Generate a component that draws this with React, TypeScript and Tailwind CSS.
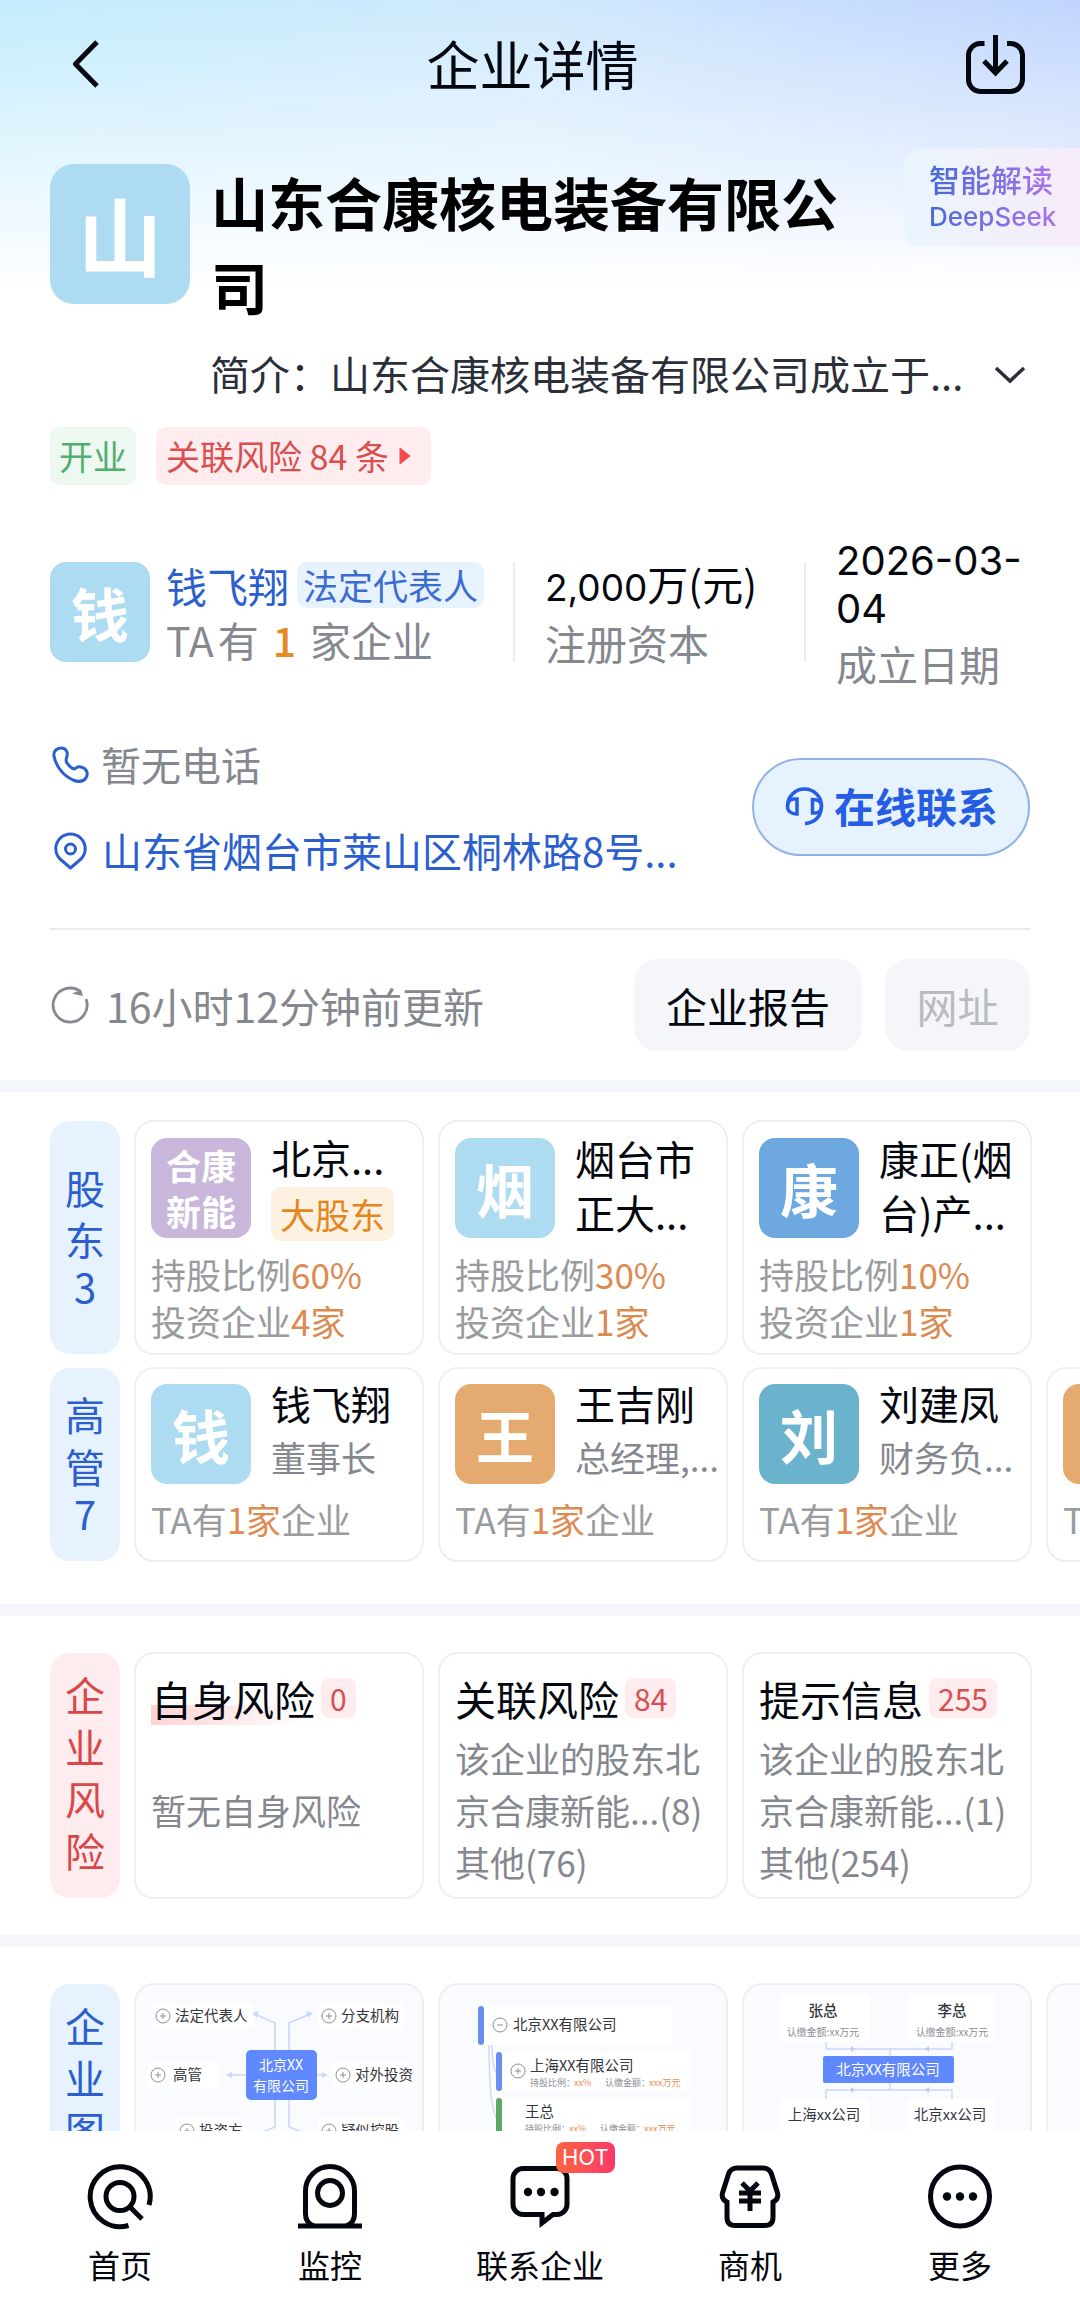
import React from "react";

type Tone = "sky" | "purple" | "blue" | "orange" | "teal";

const toneClass: Record<Tone, string> = {
  sky: "bg-[#addcf2]",
  purple: "bg-[#c8b7da]",
  blue: "bg-[#6da9e0]",
  orange: "bg-[#e5aa70]",
  teal: "bg-[#6bb3cd]",
};

function Avatar({ text, tone }: { text: string; tone: Tone }) {
  const small = text.length > 1;
  return (
    <div
      className={`flex size-[100px] shrink-0 items-center justify-center rounded-2xl text-center font-bold text-white ${toneClass[tone]} ${
        small ? "px-3 text-[35px] leading-[46px]" : "text-[58px] leading-none"
      }`}
    >
      {text}
    </div>
  );
}

function SideLabel({ chars, red }: { chars: string[]; red?: boolean }) {
  return (
    <h2
      className={`my-px flex w-[70px] shrink-0 flex-col items-center justify-center rounded-[20px] pb-2 text-[40px] font-normal ${
        red ? "bg-[#feecef] text-[#d94848]" : "bg-[#e7f2ff] text-[#2b5fd0]"
      }`}
    >
      {chars.map((c) => (
        <span key={c} className={/\d/.test(c) ? "leading-[42px]" : "leading-[52px]"}>
          {c}
        </span>
      ))}
    </h2>
  );
}

const cardClass = "w-[290px] shrink-0 rounded-[20px] border-2 border-[#efeff1] bg-white";

function CardRow({ label, children }: { label: React.ReactNode; children: React.ReactNode }) {
  return (
    <div className="flex gap-[14px] pl-[50px]">
      {label}
      <div className="flex min-w-0 flex-1 gap-[14px] overflow-x-auto [scrollbar-width:none]">{children}</div>
    </div>
  );
}

const shareholders: { logo: string; tone: Tone; name: string; tag?: string; share: string; invested: string }[] = [
  { logo: "合康新能", tone: "purple", name: "北京...", tag: "大股东", share: "60%", invested: "4家" },
  { logo: "烟", tone: "sky", name: "烟台市正大...", share: "30%", invested: "1家" },
  { logo: "康", tone: "blue", name: "康正(烟台)产...", share: "10%", invested: "1家" },
];

const executives: { logo: string; tone: Tone; name: string; role: string }[] = [
  { logo: "钱", tone: "sky", name: "钱飞翔", role: "董事长" },
  { logo: "王", tone: "orange", name: "王吉刚", role: "总经理,..." },
  { logo: "刘", tone: "teal", name: "刘建凤", role: "财务负..." },
  { logo: "", tone: "orange", name: "", role: "" },
];

const risks = [
  { title: "自身风险", count: "0", lines: ["暂无自身风险"] },
  { title: "关联风险", count: "84", lines: ["该企业的股东北", "京合康新能...(8)", "其他(76)"] },
  { title: "提示信息", count: "255", lines: ["该企业的股东北", "京合康新能...(1)", "其他(254)"] },
];

function Toggle({ x, y, minus }: { x: number; y: number; minus?: boolean }) {
  return (
    <g fill="none" stroke="#8b8e96" strokeWidth="1">
      <circle cx={x} cy={y} r="7" />
      <path d={`M${x - 3} ${y}h6`} />
      {!minus && <path d={`M${x} ${y - 3}v6`} />}
    </g>
  );
}

function RelationDiagram() {
  const nodes = [
    { x: 27, y: 31, t: "法定代表人", w: 101 },
    { x: 193, y: 31, t: "分支机构", w: 86 },
    { x: 22, y: 90, t: "高管", w: 72, dx: 15 },
    { x: 207, y: 90, t: "对外投资", w: 78 },
    { x: 51, y: 146, t: "投资方", w: 70 },
    { x: 193, y: 146, t: "疑似控股", w: 86 },
  ];
  return (
    <svg viewBox="0 0 286 242" className="w-full" role="img" aria-label="企业关系图">
      <path
        fill="none"
        stroke="#cbd8f6"
        strokeWidth="1.6"
        d="M139 66V38L119 29M153 66V38L174 29M139 115V142L119 150M153 115V142L174 150M111 90H93M181 90H189"
      />
      <path fill="#cbd8f6" d="M116 28l7-2-2 7zM177 28l-7-2 2 7zM90 90l6-3v6zM192 90l-6-3v6z" />
      {nodes.map((n) => (
        <g key={n.t}>
          <rect x={n.x - 11} y={n.y - 13} width={n.w} height="26" rx="5" fill="#fff" />
          <Toggle x={n.x} y={n.y} />
          <text x={n.x + (n.dx ?? 12)} y={n.y + 5} fontSize="14.5" fill="#33363d">
            {n.t}
          </text>
        </g>
      ))}
      <rect x="110" y="65" width="71" height="50" rx="5" fill="#6189ff" />
      <g fill="#fff" fontSize="14" textAnchor="middle">
        <text x="145" y="85">北京XX</text>
        <text x="145" y="106">有限公司</text>
      </g>
    </svg>
  );
}

function StakeLine({ x, y }: { x: number; y: number }) {
  return (
    <g fontSize="9" fill="#8b8e96">
      <text x={x} y={y}>持股比例：</text>
      <text x={x + 44} y={y} fill="#ed8b4f">xx%</text>
      <text x={x + 75} y={y}>认缴金额：</text>
      <text x={x + 119} y={y} fill="#ed8b4f">xxx万元</text>
    </g>
  );
}

function EquityTree() {
  return (
    <svg viewBox="0 0 286 242" className="w-full" role="img" aria-label="股权结构图">
      <g fill="#fff">
        <rect x="42" y="21" width="191" height="39" rx="3" />
        <rect x="60" y="67" width="191" height="39" rx="3" />
        <rect x="60" y="113" width="191" height="39" rx="3" />
      </g>
      <path d="M49 60C49 96 51 125 57 134M52 60C52 75 53 84 57 89" fill="none" stroke="#cbd8f6" strokeWidth="1.4" />
      <rect x="38" y="21" width="6" height="39" rx="3" fill="#6b8df0" />
      <rect x="56" y="67" width="6" height="39" rx="3" fill="#6b8df0" />
      <rect x="56" y="113" width="6" height="39" rx="3" fill="#5fa767" />
      <Toggle x={60} y={40} minus />
      <Toggle x={78} y={86} />
      <g fill="#33363d" fontSize="14.5">
        <text x="73" y="45">北京XX有限公司</text>
        <text x="90" y="86">上海XX有限公司</text>
        <text x="85" y="132">王总</text>
      </g>
      <StakeLine x={90} y={101} />
      <StakeLine x={85} y={147} />
    </svg>
  );
}

function ControlDiagram() {
  return (
    <svg viewBox="0 0 286 242" className="w-full" role="img" aria-label="股权穿透图">
      <g fill="#fff">
        <rect x="36" y="9" width="90" height="48" rx="3" />
        <rect x="163" y="9" width="88" height="48" rx="3" />
        <rect x="36" y="114" width="90" height="48" rx="3" />
        <rect x="163" y="114" width="88" height="48" rx="3" />
      </g>
      <path
        d="M82 57V64H208V57M146 64V71M146 98V105M82 114V105H208V114"
        fill="none"
        stroke="#cbd8f6"
        strokeWidth="1.4"
      />
      <path d="M107 61l4 3-4 3zM185 61l-4 3 4 3zM107 102l4 3-4 3zM185 102l-4 3 4 3z" fill="#b9caf5" />
      <rect x="79" y="71" width="131" height="27" rx="2" fill="#6189ff" />
      <text x="144" y="90" fontSize="14.5" fill="#fff" textAnchor="middle">北京XX有限公司</text>
      <g fill="#33363d" fontSize="14.5" textAnchor="middle">
        <text x="79" y="31" fontWeight="500">张总</text>
        <text x="208" y="31" fontWeight="500">李总</text>
        <text x="80" y="135">上海xx公司</text>
        <text x="206" y="135">北京xx公司</text>
      </g>
      <g fill="#8b8e96" fontSize="10" textAnchor="middle">
        <text x="79" y="51">认缴金额:xx万元</text>
        <text x="208" y="51">认缴金额:xx万元</text>
        <text x="81" y="156">认缴金额:xx万元</text>
        <text x="208" y="156">认缴金额:xx万元</text>
      </g>
    </svg>
  );
}

function HomeIcon() {
  return (
    <>
      <path d="M42.500 62.500A30 30 0 1 1 63 42" />
      <circle cx="34" cy="33.500" r="14" />
      <path d="M44 44L56 56" />
    </>
  );
}

function MonitorIcon() {
  return (
    <>
      <path d="M18 63C12 61 9.500 57 9.500 51V28A24.500 24.500 0 0 1 58.500 28V51C58.500 57 56 61 50 63" />
      <circle cx="34" cy="30" r="12.500" />
      <path d="M2 63H66" />
    </>
  );
}

function ChatIcon() {
  return (
    <>
      <path d="M17 5.500H51A10 10 0 0 1 61 15.500V41.500A10 10 0 0 1 51 51.500H47L36 60V51.500H17A10 10 0 0 1 7 41.500V15.500A10 10 0 0 1 17 5.500Z" />
      <g fill="currentColor" stroke="none">
        <circle cx="22" cy="29" r="4.200" />
        <circle cx="35" cy="29" r="4.200" />
        <circle cx="48.500" cy="29" r="4.200" />
      </g>
    </>
  );
}

function DealIcon() {
  return (
    <>
      <path d="M21 5H47C52 5 54 7 55.500 11L61.500 30C62.500 34 61 37 57 39V54C57 60 54 62.500 49 62.500H19C14 62.500 11 60 11 54V39C7 37 5.500 34 6.500 30L12.500 11C14 7 16 5 21 5Z" />
      <path d="M26 20L34 28L42 20M23 30H45M23 38H45M34 28V48" />
    </>
  );
}

function MoreIcon() {
  return (
    <>
      <circle cx="34" cy="33.500" r="29.500" />
      <g fill="currentColor" stroke="none">
        <circle cx="21" cy="33.500" r="4.200" />
        <circle cx="34" cy="33.500" r="4.200" />
        <circle cx="47" cy="33.500" r="4.200" />
      </g>
    </>
  );
}

const tabs = [
  { label: "首页", icon: <HomeIcon /> },
  { label: "监控", icon: <MonitorIcon /> },
  { label: "联系企业", icon: <ChatIcon />, hot: true },
  { label: "商机", icon: <DealIcon /> },
  { label: "更多", icon: <MoreIcon /> },
];

export default function App() {
  return (
    <div className="flex h-screen flex-col overflow-hidden bg-white font-['Noto_Sans_CJK_SC',sans-serif] text-[#05070f]">
      <main className="min-h-0 flex-1 overflow-x-hidden overflow-y-auto [scrollbar-width:none]">
        <div className="bg-[linear-gradient(180deg,transparent_0px,rgba(255,255,255,0.45)_130px,#fff_290px),linear-gradient(90deg,#c3ecfe_0%,#d0e9fd_50%,#c0d5fe_100%)]">
          <header className="flex h-[130px] items-center justify-between px-[50px]">
            <button aria-label="返回" className="flex w-[55px] justify-end">
              <svg viewBox="0 0 32 56" className="h-14 w-8" fill="none" stroke="currentColor" strokeWidth="5" strokeLinejoin="round">
                <path d="M24 5L2.500 27L24 49" />
              </svg>
            </button>
            <h1 className="pb-1 text-[53px] leading-[76px] font-normal">企业详情</h1>
            <button aria-label="下载" className="flex w-[70px] justify-end">
              <svg viewBox="0 0 68 68" className="size-[68px]" fill="none" stroke="currentColor" strokeWidth="5">
                <path d="M22.500 12.500H18A12 12 0 0 0 6.500 24V48A12 12 0 0 0 18 60.500H48A12 12 0 0 0 60.500 48V24A12 12 0 0 0 48 12.500H45" />
                <path d="M33.500 4V43M22 30L33.500 42L45 30" />
              </svg>
            </button>
          </header>

          <section className="flex items-start pt-[18px] pl-[50px]">
            <div className="mt-4 flex size-[140px] shrink-0 items-center justify-center rounded-3xl bg-[#addcf2] text-[84px] leading-[136px] font-bold text-white">
              山
            </div>
            <h2 className="mt-[11px] ml-[21px] min-w-0 flex-1 pr-12 text-[57px] leading-[84px] font-bold text-black">
              山东合康核电装备有限公司
            </h2>
            <button className="flex h-[98px] w-[176px] shrink-0 flex-col items-start justify-center rounded-l-2xl bg-linear-to-r from-[#eaf5fe] to-[#f6ecf8] pl-[25px]">
              <span className="bg-linear-to-r from-[#4468d8] to-[#ab72ea] bg-clip-text text-[31px] leading-9 font-medium text-transparent">
                智能解读
              </span>
              <span className="bg-linear-to-r from-[#4468d8] to-[#ab72ea] bg-clip-text pt-1 font-['Inter'] text-[26px] leading-8 font-medium text-transparent">
                DeepSeek
              </span>
            </button>
          </section>
        </div>

        <section className="px-[50px]">
          <div className="mt-4 flex h-[60px] items-center justify-between pl-[160px] text-[40px] leading-[60px] text-[#2b2f3a]">
            <p className="whitespace-nowrap">简介：山东合康核电装备有限公司成立于...</p>
            <button aria-label="展开" className="pt-1">
              <svg viewBox="0 0 40 24" className="h-6 w-10" fill="none" stroke="currentColor" strokeWidth="3.500">
                <path d="M6 5L20 18L34 5" />
              </svg>
            </button>
          </div>

          <div className="mt-6 flex gap-5 text-[34px] leading-[58px]">
            <span className="rounded-[10px] bg-[#edf8f0] px-[9px] text-[#52ae70]">开业</span>
            <button className="flex items-center rounded-[10px] bg-[#feecef] px-[10px] text-[#d94f50]">
              关联风险 84 条
              <svg viewBox="0 0 12 20" className="mx-[10px] h-5 w-3" fill="#f2494f">
                <path d="M1 2L11 10L1 18Z" stroke="#f2494f" strokeLinejoin="round" />
              </svg>
            </button>
          </div>

          <div className="mt-[46px] flex items-center text-[41px]">
            <Avatar text="钱" tone="sky" />
            <div className="ml-4 min-w-0 flex-1">
              <div className="flex items-center gap-2">
                <a href="#person" className="leading-[54px] text-[#2b5fd0]">钱飞翔</a>
                <span className="rounded-[10px] bg-[#e7f2ff] px-[6px] text-[35px] leading-[46px] text-[#3c6cd2]">
                  法定代表人
                </span>
              </div>
              <div className="flex leading-[54px] text-[#85888f]">
                <span className="mr-1">TA</span>有<span className="mx-[14px] font-medium text-[#e88a24]">1</span>家企业
              </div>
            </div>
            <div className="h-[100px] w-[2px] bg-[#ebebed]" />
            <div className="w-[289px] pl-[30px]">
              <div className="leading-[54px]">
                <span className="font-['Inter'] text-[37px]">2,000</span>万(元)
              </div>
              <div className="leading-[54px] text-[#85888f]">注册资本</div>
            </div>
            <div className="h-[100px] w-[2px] bg-[#ebebed]" />
            <div className="w-[224px] pt-[6px] pl-[30px]">
              <div className="font-['Inter'] text-[40px] leading-[48px]">
                2026-03-
                <br />
                04
              </div>
              <div className="leading-[60px] text-[#85888f]">成立日期</div>
            </div>
          </div>

          <div className="mt-7 flex items-center justify-between text-[40px]">
            <div className="flex flex-col">
              <div className="flex h-[86px] items-center text-[#85888f]">
                <svg viewBox="0 0 40 40" className="mr-[11px] size-10" fill="none" stroke="#2b5fd0" strokeWidth="3">
                  <path d="M4 12C3 7 7 4 11 4C16 4 18 8 17 12C16.500 15 15 16 17 19C19 22 21 24 24 25C27 24 27 22 31 23C36 24 39 29 36 34C33 38 28 38 23 36C14 32 6 23 4 12Z" />
                </svg>
                <span>暂无电话</span>
              </div>
              <a href="#address" className="flex h-[86px] items-center text-[#2b5fd0]">
                <svg viewBox="0 0 40 40" className="mr-3 size-10" fill="none" stroke="currentColor" strokeWidth="3">
                  <path d="M20.500 38L9.500 28.500A14.700 14.700 0 1 1 31.500 28.500Z" strokeLinejoin="round" />
                  <circle cx="20.500" cy="19" r="5" />
                </svg>
                <span>山东省烟台市莱山区桐林路8号...</span>
              </a>
            </div>
            <button className="flex h-[98px] w-[278px] items-center justify-center gap-2 rounded-full border-2 border-[#92b1e4] bg-[#e7f2ff] pb-0.5 text-[41px] font-bold text-[#255de4]">
              <svg viewBox="0 0 42 42" className="size-[42px]" fill="none" stroke="currentColor" strokeWidth="3.500">
                <path d="M3.500 21A17 17 0 0 1 37.500 21C37.500 31 31 38 21 38.500" />
                <path d="M13 29V14H9.500C5.500 14.500 3.500 18 3.500 21.500C3.500 26 7 29 13 29Z" />
                <path d="M28.500 14.500V28H32C35.500 27.500 37.500 24 37.500 21C37.500 17 34 14.500 28.500 14.500Z" />
              </svg>
              在线联系
            </button>
          </div>

          <hr className="mt-[35px] border-t-2 border-[#ebebed]" />

          <div className="flex items-center py-[29px] text-[41px] leading-[60px]">
            <svg viewBox="0 0 40 40" className="mr-4 size-10" fill="none" stroke="#85888f" strokeWidth="2.800">
              <path d="M36 14A17 17 0 1 1 31 7" />
              <path d="M22 8.500L33 11L31 5Z" fill="#85888f" stroke="none" />
            </svg>
            <span className="flex-1 text-[#85888f]">16小时12分钟前更新</span>
            <button className="h-[92px] w-[228px] rounded-3xl bg-[#f4f6fa]">企业报告</button>
            <button className="ml-[23px] h-[92px] w-[145px] rounded-3xl bg-[#f4f6fa] text-[#b9bbc0]">网址</button>
          </div>
        </section>

        <div className="h-3 bg-[#f5f6fb]" />

        <section className="pt-7 pb-[42px]">
          <CardRow label={<SideLabel chars={["股", "东", "3"]} />}>
            {shareholders.map((s) => (
              <article key={s.logo} className={`${cardClass} pt-4 pb-[9px] pl-[15px] leading-[47px]`}>
                <div className="flex h-[100px] gap-5">
                  <Avatar text={s.logo} tone={s.tone} />
                  <div className="min-w-0">
                    <h3
                      className={`text-[40px] font-normal break-all ${
                        s.tag ? "-mt-0.5 leading-[42px]" : "-mt-[7px] leading-[54px]"
                      }`}
                    >
                      {s.name}
                    </h3>
                    {s.tag && (
                      <span className="mt-[9px] block rounded-[10px] bg-[#fff1e2] px-[9px] text-[35px] leading-[54px] whitespace-nowrap text-[#e5861c]">
                        {s.tag}
                      </span>
                    )}
                  </div>
                </div>
                <dl className="mt-3 text-[35px] text-[#999b9f]">
                  <div className="flex">
                    <dt>持股比例</dt>
                    <dd className="text-[#dd8a50]">{s.share}</dd>
                  </div>
                  <div className="flex">
                    <dt>投资企业</dt>
                    <dd className="text-[#dd8a50]">{s.invested}</dd>
                  </div>
                </dl>
              </article>
            ))}
          </CardRow>
          <div className="mt-3">
            <CardRow label={<SideLabel chars={["高", "管", "7"]} />}>
              {executives.map((e, i) => (
                <article key={i} className={`${cardClass} pt-[15px] pb-[15px] pl-[15px]`}>
                  <div className="flex h-[100px] gap-5">
                    <Avatar text={e.logo} tone={e.tone} />
                    <div className="whitespace-nowrap">
                      <h3 className="-mt-0.5 text-[40px] leading-[42px] font-normal">{e.name}</h3>
                      <p className="mt-[6px] text-[35px] leading-[54px] text-[#85888f]">{e.role}</p>
                    </div>
                  </div>
                  <p className="mt-[9px] text-[35px] leading-[52px] text-[#999b9f]">
                    TA有<span className="text-[#dd8a50]">1家</span>企业
                  </p>
                </article>
              ))}
            </CardRow>
          </div>
        </section>

        <div className="h-3 bg-[#f5f6fb]" />

        <section className="py-9">
          <CardRow label={<SideLabel chars={["企", "业", "风", "险"]} red />}>
            {risks.map((r) => (
              <article key={r.title} className={`${cardClass} flex h-[247px] flex-col pt-[14px] pb-[6px] pl-[15px]`}>
                <div className="flex items-center gap-[6px]">
                  <h3
                    className={`text-[41px] leading-[60px] font-normal ${
                      r.lines.length === 1
                        ? "bg-[linear-gradient(90deg,#fdd3d3,transparent)] bg-[length:155px_20px] bg-[position:0_37px] bg-no-repeat"
                        : ""
                    }`}
                  >
                    {r.title}
                  </h3>
                  <span className="rounded-lg bg-[#feecef] px-[9px] text-[30px] leading-[40px] text-[#d94f50]">
                    {r.count}
                  </span>
                </div>
                <div className="flex flex-1 flex-col justify-center text-[35px] leading-[52px] whitespace-nowrap text-[#85888f]">
                  {r.lines.map((l) => (
                    <p key={l}>{l}</p>
                  ))}
                </div>
              </article>
            ))}
          </CardRow>
        </section>

        <div className="h-3 bg-[#f5f6fb]" />

        <section className="py-9">
          <CardRow label={<SideLabel chars={["企", "业", "图", "谱"]} />}>
            {[<RelationDiagram />, <EquityTree />, <ControlDiagram />, null].map((d, i) => (
              <article key={i} className="h-[247px] w-[290px] shrink-0 rounded-[20px] border-2 border-[#eeeff2] bg-[#fafbff]">
                {d}
              </article>
            ))}
          </CardRow>
        </section>
      </main>

      <nav className="grid h-[185px] shrink-0 grid-cols-5 bg-white px-[15px]">
        {tabs.map((t) => (
          <a key={t.label} href={`#${t.label}`} className="relative flex flex-col items-center pt-8 text-[32px] leading-[46px]">
            <svg viewBox="0 0 68 68" className="size-[68px]" fill="none" stroke="currentColor" strokeWidth="5">
              {t.icon}
            </svg>
            <span className="mt-[10px]">{t.label}</span>
            {t.hot && (
              <span className="absolute top-[11px] left-1/2 ml-4 rounded-lg bg-linear-to-r from-[#fb6340] to-[#fb3767] px-[6px] font-['Inter'] text-[22px] leading-[31px] text-white">
                HOT
              </span>
            )}
          </a>
        ))}
      </nav>
    </div>
  );
}
